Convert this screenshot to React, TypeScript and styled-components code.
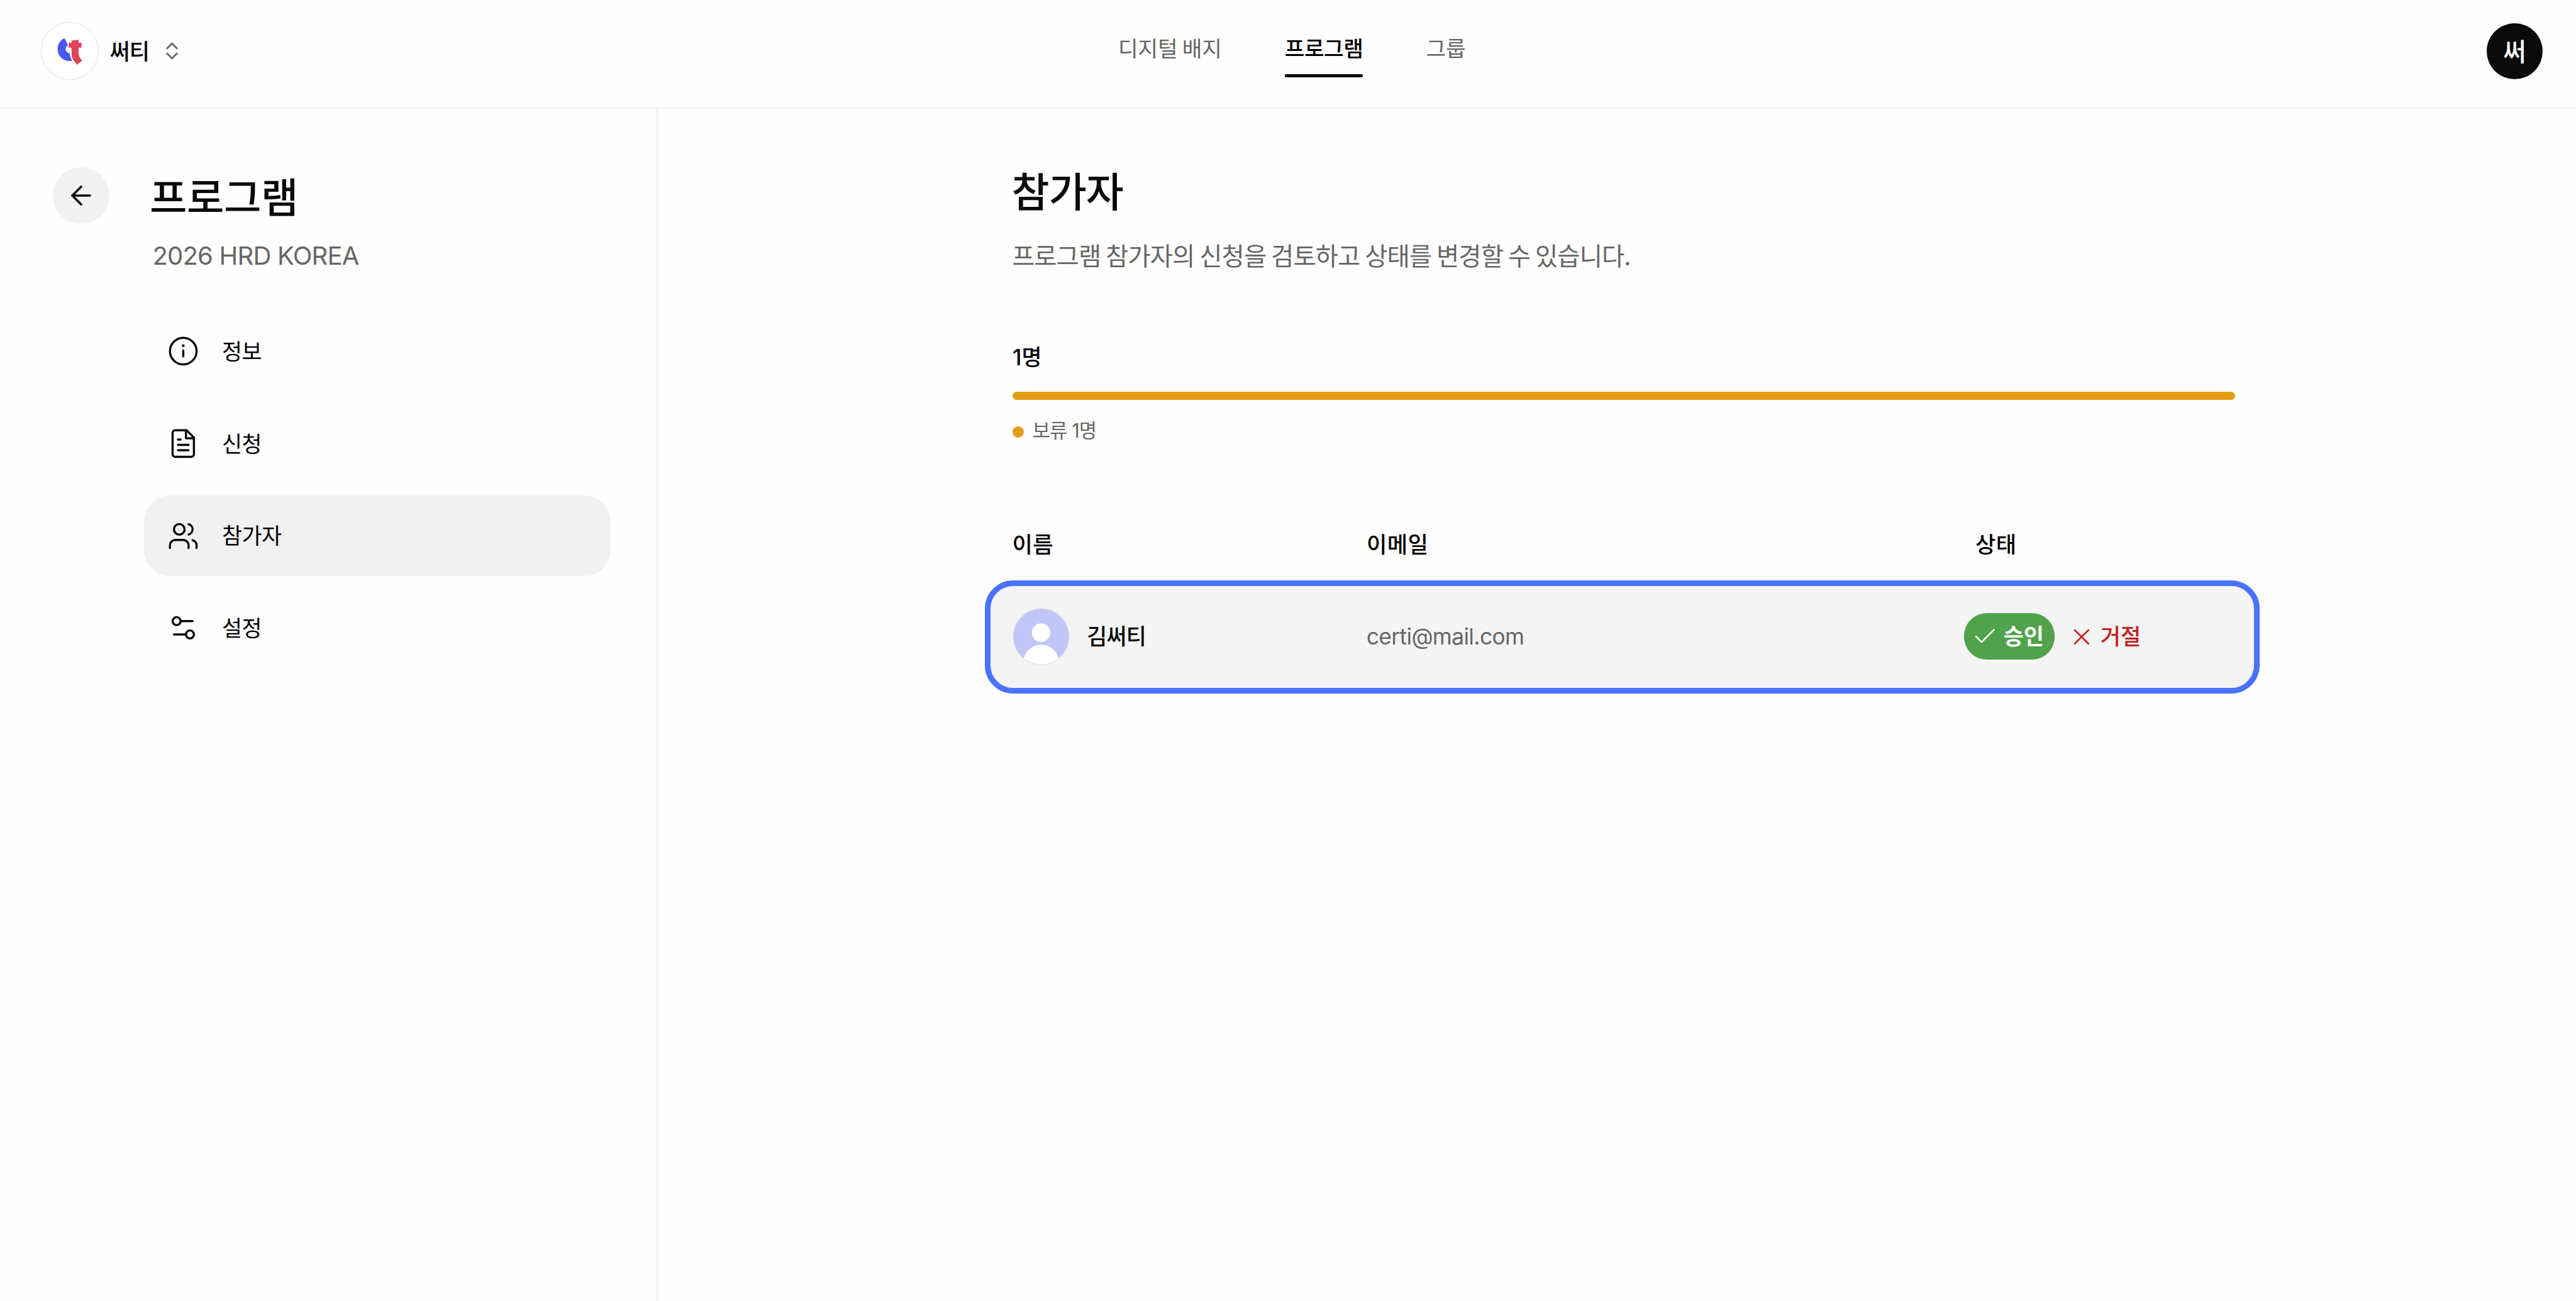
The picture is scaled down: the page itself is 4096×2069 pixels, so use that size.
import React from 'react';
import styled, { createGlobalStyle } from 'styled-components';
import { ArrowLeft, Check, X } from 'lucide-react';

const korean = '"Noto Sans CJK KR", sans-serif';
const mixed = 'Inter, "Noto Sans CJK KR", sans-serif';

const GlobalStyle = createGlobalStyle`
  *, *::before, *::after { box-sizing: border-box; }
  html, body { margin: 0; background: #fefefe; }
  body { font-family: ${korean}; color: #0a0a0a; }
  h1, h2, p { margin: 0; }
  button { border: 0; padding: 0; font: inherit; color: inherit; background: none; }
  svg { display: block; flex: none; }
`;

const Page = styled.div`
  display: flex;
  flex-direction: column;
  width: 4096px;
  height: 2069px;
  overflow: hidden;
  background: #fefefe;
`;

/* Header */

const Header = styled.header`
  display: flex;
  align-items: flex-start;
  flex: none;
  height: 173px;
  border-bottom: 2px solid #ededed;
`;

const Workspace = styled.div`
  display: flex;
  align-items: center;
  width: 1778px;
  height: 92px;
  margin-top: 35px;
  padding-left: 64.5px;
`;

const LogoBadge = styled.div`
  width: 92px;
  height: 92px;
  border: 1.5px solid #e4e4e4;
  border-radius: 50%;
  background: #fff;
  overflow: hidden;

  svg { width: 100%; height: 100%; }
`;

const WorkspaceName = styled.span`
  margin-left: 18px;
  padding-bottom: 2px;
  font-size: 35px;
  font-weight: 500;
  line-height: 50px;
  letter-spacing: -1px;
  color: #000;
`;

const Chevrons = styled.svg`
  width: 19px;
  height: 28px;
  margin-left: 27px;
`;

const Nav = styled.nav`
  display: flex;
  gap: 100px;
  margin-top: 50px;
`;

const NavItem = styled.a<{ $active?: boolean }>`
  display: flex;
  flex-direction: column;
  gap: 18px;
  font-size: 34.4px;
  font-weight: ${p => (p.$active ? 500 : 400)};
  line-height: 50px;
  letter-spacing: ${p => (p.$active ? '-0.45px' : '-0.2px')};
  color: ${p => (p.$active ? '#000' : '#636363')};
`;

const Underline = styled.span`
  height: 5px;
  border-radius: 2px;
  background: #000;
`;

const Profile = styled.div`
  display: flex;
  align-items: center;
  justify-content: center;
  width: 89px;
  height: 89px;
  margin: 37px 53px 0 auto;
  padding-bottom: 3px;
  border-radius: 50%;
  background: #0a0a0a;
  color: #fff;
  font-size: 40px;
  font-weight: 500;
  line-height: 60px;
`;

/* Sidebar */

const Body = styled.div`
  display: flex;
  flex: 1;
`;

const Sidebar = styled.aside`
  display: flex;
  align-items: flex-start;
  flex: none;
  width: 1046px;
  padding-left: 84.4px;
  border-right: 2px solid #ededed;
`;

const BackButton = styled.button`
  display: flex;
  align-items: center;
  justify-content: center;
  flex: none;
  width: 89.5px;
  height: 89.5px;
  margin-top: 93px;
  border-radius: 50%;
  background: #f1f1f1;
`;

const SidebarContent = styled.div`
  width: 742px;
  margin: 97px 0 0 55.5px;
`;

const SidebarTitle = styled.h2`
  padding-left: 8.5px;
  font-size: 64.6px;
  font-weight: 500;
  line-height: 80px;
  letter-spacing: -0.4px;
`;

const SidebarSubtitle = styled.p`
  margin-top: 32px;
  padding-left: 13px;
  font-family: ${mixed};
  font-size: 40px;
  line-height: 50px;
  letter-spacing: -0.78px;
  color: #666;
`;

const Menu = styled.ul`
  display: flex;
  flex-direction: column;
  gap: 18.6px;
  margin: 62.8px 0 0;
  padding: 0;
  list-style: none;
`;

const MenuItem = styled.li<{ $active?: boolean }>`
  display: flex;
  align-items: center;
  gap: 35.7px;
  height: 128px;
  padding-left: 37px;
  border-radius: 41px;
  background: ${p => (p.$active ? '#f1f1f1' : 'transparent')};
`;

const MenuIcon = styled.svg`
  width: 50.8px;
  height: 50.8px;
  fill: none;
  stroke: #0a0a0a;
  stroke-width: 1.6;
  stroke-linecap: round;
  stroke-linejoin: round;
`;

const MenuLabel = styled.span`
  padding-bottom: 3px;
  font-size: 34.8px;
  line-height: 50px;
  letter-spacing: -0.4px;
  color: #000;
`;

/* Main */

const Main = styled.main`
  display: flex;
  flex-direction: column;
  width: 2507.5px;
  padding: 88px 0 0 564px;
`;

const Title = styled.h1`
  margin-left: -1.5px;
  font-size: 65.3px;
  font-weight: 500;
  line-height: 80px;
  letter-spacing: -0.9px;
`;

const Description = styled.p`
  margin: 39px 0 0 -1px;
  font-size: 39.4px;
  line-height: 50px;
  letter-spacing: -0.93px;
  color: #666;
`;

const Total = styled.p`
  margin-top: 112.6px;
  font-family: ${mixed};
  font-size: 34.8px;
  font-weight: 500;
  line-height: 50px;
  color: #000;
`;

const ProgressBar = styled.div`
  height: 13px;
  margin-top: 30.4px;
  border-radius: 7px;
  background: #e39d13;
`;

const Legend = styled.div`
  display: flex;
  align-items: center;
  gap: 13.5px;
  margin-top: 29px;
  font-family: ${mixed};
  font-size: 30.8px;
  line-height: 40px;
  letter-spacing: -0.9px;
  color: #666;
`;

const LegendDot = styled.span`
  width: 18px;
  height: 18px;
  margin-top: 3.6px;
  border-radius: 50%;
  background: #e39d13;
`;

const TableHead = styled.div`
  display: grid;
  grid-template-columns: 563.5px 968px 1fr;
  margin: 134px 0 0 -0.6px;
  font-size: 35.2px;
  font-weight: 500;
  line-height: 50px;
  letter-spacing: 0.4px;
  color: #000;
`;

const TableRow = styled.div`
  display: grid;
  grid-template-columns: 563px 950px 1fr;
  align-items: center;
  width: 2027.5px;
  height: 180px;
  margin: 34px 0 0 -44.3px;
  padding: 0 0 1px 35px;
  border: 9px solid #4a72ff;
  border-radius: 45px;
  background: #f4f4f4;
`;

const Person = styled.div`
  display: flex;
  align-items: center;
  gap: 27.5px;
`;

const PersonAvatar = styled.svg`
  width: 91px;
  height: 91px;
`;

const PersonName = styled.span`
  padding-bottom: 5px;
  font-size: 34.8px;
  font-weight: 500;
  line-height: 50px;
  letter-spacing: -0.7px;
  color: #000;
`;

const Email = styled.span`
  font-family: ${mixed};
  padding-top: 1px;
  font-size: 35.3px;
  line-height: 50px;
  letter-spacing: -0.6px;
  color: #666;
`;

const Actions = styled.div`
  display: flex;
  align-items: center;
  gap: 9px;
`;

const ActionButton = styled.button<{ $primary?: boolean }>`
  display: flex;
  align-items: center;
  gap: 8px;
  width: ${p => (p.$primary ? '144px' : 'auto')};
  height: 74px;
  padding: 0 12.4px;
  border-radius: 36px;
  background: ${p => (p.$primary ? '#50a24b' : 'transparent')};
  color: ${p => (p.$primary ? '#fff' : '#c22321')};
  font-weight: ${p => (p.$primary ? 700 : 500)};
`;

const ActionLabel = styled.span`
  padding-bottom: 5px;
  font-size: 35px;
  line-height: 50px;
  white-space: nowrap;
`;

const menu = [
  {
    label: '정보',
    icon: (
      <>
        <circle cx="12" cy="12" r="10" />
        <path d="M12 16v-4.4" />
        <circle cx="12" cy="7.9" r="1.05" fill="#0a0a0a" stroke="none" />
      </>
    ),
  },
  {
    label: '신청',
    icon: (
      <>
        <path d="M14.5 2H6a2 2 0 0 0-2 2v16a2 2 0 0 0 2 2h12a2 2 0 0 0 2-2V7.5L14.5 2z" />
        <path d="M14 2v6h6M10 9H8M16 13H8M16 17H8" />
      </>
    ),
  },
  {
    label: '참가자',
    active: true,
    icon: (
      <>
        <path d="M16 21v-2a4 4 0 0 0-4-4H6a4 4 0 0 0-4 4v2" />
        <circle cx="9" cy="7" r="4" />
        <path d="M22 21v-2a4 4 0 0 0-3-3.87M16 3.13a4 4 0 0 1 0 7.75" />
      </>
    ),
  },
  {
    label: '설정',
    icon: (
      <>
        <path d="M19 7h-9M14 17H5" />
        <circle cx="17" cy="17" r="3" />
        <circle cx="7" cy="7" r="3" />
      </>
    ),
  },
];

export default function App() {
  return (
    <>
      <GlobalStyle />
      <Page>
        <Header>
          <Workspace>
            <LogoBadge>
              <svg viewBox="93 91 378 380">
                <path
                  fill="#4b58f5"
                  d="M246 196L271 243C260 248 254 258 254 268C254 283 265 294 281 297Q284 325 297 348C242 355 200 318 200 270C200 236 220 206 246 196Z"
                />
                <path
                  fill="#de4359"
                  d="M294 211L341 206V226H361V259H341V300Q343 326 366 345L331 373C305 346 294 325 294 300V259H275V226H294Z"
                />
              </svg>
            </LogoBadge>
            <WorkspaceName>써티</WorkspaceName>
            <Chevrons viewBox="0 0 19 28" fill="none" stroke="#636363" strokeWidth="2.6" strokeLinecap="round" strokeLinejoin="round">
              <path d="M1.7 10L9.5 2L17.3 10M1.7 18L9.5 26L17.3 18" />
            </Chevrons>
          </Workspace>
          <Nav>
            <NavItem>디지털 배지</NavItem>
            <NavItem $active>
              프로그램
              <Underline />
            </NavItem>
            <NavItem>그룹</NavItem>
          </Nav>
          <Profile>써</Profile>
        </Header>
        <Body>
          <Sidebar>
            <BackButton aria-label="뒤로">
              <ArrowLeft size={48} strokeWidth={1.8} />
            </BackButton>
            <SidebarContent>
              <SidebarTitle>프로그램</SidebarTitle>
              <SidebarSubtitle>2026 HRD KOREA</SidebarSubtitle>
              <Menu>
                {menu.map(item => (
                  <MenuItem key={item.label} $active={item.active}>
                    <MenuIcon viewBox="0 0 24 24">{item.icon}</MenuIcon>
                    <MenuLabel>{item.label}</MenuLabel>
                  </MenuItem>
                ))}
              </Menu>
            </SidebarContent>
          </Sidebar>
          <Main>
            <Title>참가자</Title>
            <Description>프로그램 참가자의 신청을 검토하고 상태를 변경할 수 있습니다.</Description>
            <Total>1명</Total>
            <ProgressBar />
            <Legend>
              <LegendDot />
              <span>보류 1명</span>
            </Legend>
            <TableHead>
              <span>이름</span>
              <span>이메일</span>
              <span>상태</span>
            </TableHead>
            <TableRow>
              <Person>
                <PersonAvatar viewBox="0 0 91 91">
                  <defs>
                    <clipPath id="avatar-clip">
                      <circle cx="45.5" cy="45.5" r="44.5" />
                    </clipPath>
                  </defs>
                  <g clipPath="url(#avatar-clip)">
                    <rect width="91" height="91" fill="#c1c6f9" />
                    <circle cx="45.3" cy="39.2" r="14.7" fill="#fff" />
                    <circle cx="45.5" cy="87" r="28.7" fill="#fff" />
                  </g>
                  <circle cx="45.5" cy="45.5" r="44.7" fill="none" stroke="#e4e4ea" strokeWidth="1.4" />
                </PersonAvatar>
                <PersonName>김써티</PersonName>
              </Person>
              <Email>certi@mail.com</Email>
              <Actions>
                <ActionButton $primary>
                  <Check size={42.5} strokeWidth={1.5} />
                  <ActionLabel>승인</ActionLabel>
                </ActionButton>
                <ActionButton>
                  <X size={43.7} strokeWidth={1.5} />
                  <ActionLabel>거절</ActionLabel>
                </ActionButton>
              </Actions>
            </TableRow>
          </Main>
        </Body>
      </Page>
    </>
  );
}
